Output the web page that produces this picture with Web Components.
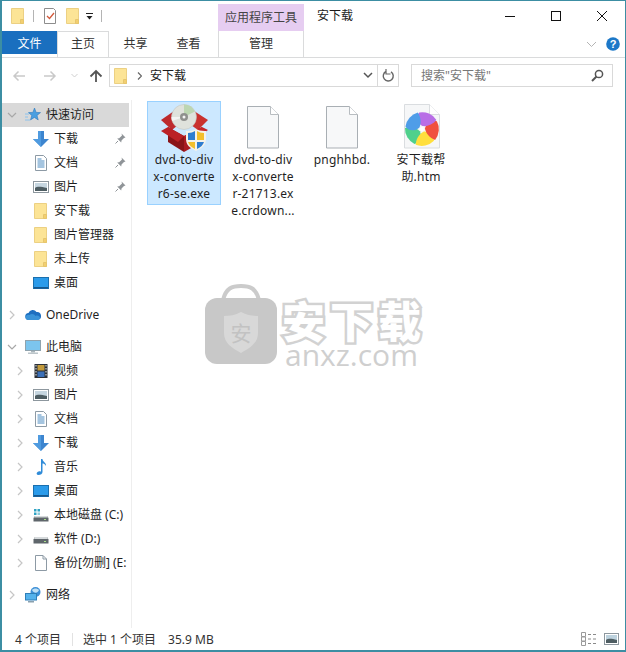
<!DOCTYPE html>
<html lang="zh-CN">
<head>
<meta charset="utf-8">
<title>安下载</title>
<style>
  html, body { margin: 0; padding: 0; background: #fff; }
  body { font: 12px "Noto Sans", "Noto Sans CJK SC", sans-serif; color: #1a1a1a; }
</style>
</head>
<body>
<explorer-window>
  <title-row slot="title"></title-row>
  <ribbon-tabs slot="ribbon"></ribbon-tabs>
  <address-row slot="address"></address-row>
  <nav-tree slot="nav">
    <nav-item selected arrow="open" icon="star" text="快速访问"></nav-item>
    <nav-item level="1" icon="down" text="下载" pin></nav-item>
    <nav-item level="1" icon="doc" text="文档" pin></nav-item>
    <nav-item level="1" icon="pic" text="图片" pin></nav-item>
    <nav-item level="1" icon="folder" text="安下载"></nav-item>
    <nav-item level="1" icon="folder" text="图片管理器"></nav-item>
    <nav-item level="1" icon="folder" text="未上传"></nav-item>
    <nav-item level="1" icon="desk" text="桌面" class="end"></nav-item>
    <nav-item arrow="shut" icon="cloud" text="OneDrive" class="end"></nav-item>
    <nav-item arrow="open" icon="pc" text="此电脑"></nav-item>
    <nav-item level="1" arrow="shut" icon="film" text="视频"></nav-item>
    <nav-item level="1" arrow="shut" icon="pic" text="图片"></nav-item>
    <nav-item level="1" arrow="shut" icon="doc" text="文档"></nav-item>
    <nav-item level="1" arrow="shut" icon="down" text="下载"></nav-item>
    <nav-item level="1" arrow="shut" icon="music" text="音乐"></nav-item>
    <nav-item level="1" arrow="shut" icon="desk" text="桌面"></nav-item>
    <nav-item level="1" arrow="shut" icon="sysdisk" text="本地磁盘 (C:)"></nav-item>
    <nav-item level="1" arrow="shut" icon="disk" text="软件 (D:)"></nav-item>
    <nav-item level="1" arrow="shut" icon="blank" text="备份[勿删] (E:" class="end"></nav-item>
    <nav-item arrow="shut" icon="net" text="网络"></nav-item>
  </nav-tree>
  <file-list slot="files">
    <file-item selected icon="setup">dvd-to-div<br>x-converte<br>r6-se.exe</file-item>
    <file-item icon="page">dvd-to-div<br>x-converte<br>r-21713.ex<br>e.crdown...</file-item>
    <file-item icon="page">pnghhbd.</file-item>
    <file-item icon="wheel">安下载帮<br>助.htm</file-item>
  </file-list>
  <status-bar slot="status"></status-bar>
  <water-mark slot="over"></water-mark>
</explorer-window>

<script>
const ICONS = {
  folder: `<svg viewBox="0 0 16 16"><path d="M1.500 .5h12v15h-12z" fill="#fce496" stroke="#ecd083"/><path d="M10.500 11.500h3v4h-3z" fill="#f3cf70" stroke="#e6c66e"/></svg>`,
  star: `<svg viewBox="0 0 16 16"><path d="M9.500 1l1.600 4.400 4.400.2-3.500 2.800 1.200 4.500-3.800-2.500-3.900 2.500 1.300-4.500L3.500 5.600l4.400-.2z" fill="#4a9fe0" stroke="#2b78c0" stroke-width=".6"/><path d="M0 7h4M0 10h3M0 13h5" stroke="#8cc2ec" stroke-width="1"/></svg>`,
  down: `<svg viewBox="0 0 16 16"><path d="M5 0h6v8h5l-8 8-8-8h5z" fill="#3d85cf"/><path d="M5 0h3v16l-8-8h5z" fill="#4f9be0"/></svg>`,
  doc: `<svg viewBox="0 0 16 16"><path d="M2.500 .5h8l3 3v12h-11z" fill="#fff" stroke="#8d9aa5"/><path d="M4.500 4h4M4.500 6h7M4.500 8h7M4.500 10h7M4.500 12h7" stroke="#4a8ac0" stroke-width="1"/></svg>`,
  pic: `<svg viewBox="0 0 16 16"><rect x=".5" y="2.500" width="15" height="11" fill="#fff" stroke="#8d979e"/><rect x="2" y="4" width="12" height="8" fill="#c6d6e0"/><path d="M2 9c3-2 6-1 12 0v3H2z" fill="#4e5d62"/></svg>`,
  desk: `<svg viewBox="0 0 16 16"><rect x=".5" y="2.500" width="15" height="11" fill="#2b9bea" stroke="#1a6fae"/><rect x="1" y="12" width="14" height="1.500" fill="#16578c"/></svg>`,
  cloud: `<svg viewBox="0 0 16 16"><path d="M4 13a3.500 3.500 0 0 1-.5-7A4.500 4.500 0 0 1 11.500 5 3.800 3.800 0 0 1 12.500 13z" fill="#1e6fc0"/><path d="M4 13c-2 0-3.500-1-3.500-3 0-1 2-3 4-2 2-2 5-1 6 1 2-1 4.500 0 4.500 2 0 1-1 2-2.500 2z" fill="#3a93d8"/></svg>`,
  pc: `<svg viewBox="0 0 16 16"><rect x=".5" y="1.500" width="15" height="10" fill="#7cc5ee" stroke="#8fa3ae"/><rect x="6" y="12" width="4" height="1.500" fill="#a9b5bc"/><rect x="3" y="13.500" width="10" height="1.500" fill="#bcc5ca"/></svg>`,
  film: `<svg viewBox="0 0 16 16"><rect x="1.500" y="1" width="13" height="14" fill="#2b3038"/><rect x="4.500" y="2" width="7" height="5.500" fill="#c29a3c"/><rect x="4.500" y="8.500" width="7" height="5.500" fill="#3b70b8"/><path d="M2.500 2h1v1.500h-1zM2.500 5h1v1.500h-1zM2.500 8h1v1.500h-1zM2.500 11h1v1.500h-1zM12.500 2h1v1.500h-1zM12.500 5h1v1.500h-1zM12.500 8h1v1.500h-1zM12.500 11h1v1.500h-1z" fill="#e8edf0"/></svg>`,
  music: `<svg viewBox="0 0 16 16"><path d="M8 0h1.500c0 3 4 3.500 3.500 7-1-2-2.500-2.500-3.500-2.500V13c0 2-2 3-4 3s-2.500-2-1-3c1-.8 2.500-.8 3.500-.3z" fill="#2f8bd8"/></svg>`,
  sysdisk: `<svg viewBox="0 0 16 16"><path d="M1 2h2.500v2.500H1zM4.500 2H7v2.500H4.500zM1 5.500h2.500V8H1z" fill="#2fa3c4"/><path d="M4.500 5.500H7V8H4.500z" fill="#8fcbdc"/><path d="M2 9h12l1.500 2v3.500H.5V11z" fill="#5f666b"/><path d="M2 9h12l1 1.500H1z" fill="#d6dadc"/><rect x="11" y="12" width="2" height="1" fill="#a8e08a"/></svg>`,
  disk: `<svg viewBox="0 0 16 16"><path d="M2 6h12l1.500 2.500v4H.5v-4z" fill="#5f666b"/><path d="M2 6h12l1 2H1z" fill="#d6dadc"/><rect x="11" y="10" width="2" height="1" fill="#a8e08a"/></svg>`,
  blank: `<svg viewBox="0 0 16 16"><path d="M2.500 .5h7.500l3.500 3.500v11.500h-11z" fill="#fff" stroke="#8d9aa5"/><path d="M10 .5V4h3.500" fill="none" stroke="#8d9aa5"/></svg>`,
  net: `<svg viewBox="0 0 16 16"><circle cx="10.500" cy="5" r="5" fill="#3d8fd6"/><path d="M7 3c2-2 5-2 7 0-1 3-5 4-7 0z" fill="#bfe0f5"/><rect x=".5" y="6.500" width="11" height="6.500" fill="#54b2ec" stroke="#2f7fb8"/><rect x="3" y="14" width="6" height="1.500" fill="#8aa0ae"/></svg>`
};

const PETAL = "M0 -3C-5 -5 -8 -11 -5 -16A17 17 0 0 1 13 -11C10 -6 5 -3 0 -3z";

const BIG_ICONS = {
  page: `<svg viewBox="0 0 48 50" width="48" height="50"><path d="M8.500 4.500h23l8 8v33.500h-31z" fill="#f7f8f9" stroke="#a9afb4"/><path d="M31.500 4.500v8h8" fill="#fff" stroke="#b8bdc1"/></svg>`,
  wheel: `<svg viewBox="0 0 48 50" width="48" height="50"><path d="M7.500 2.500h25l10 10v33.500h-35z" fill="#f6f7f8" stroke="#dadde0"/><path d="M32.500 2.500v10h10" fill="#fff" stroke="#dadde0"/>
    <g transform="translate(25 27)">
      <path d="${PETAL}" fill="#4fd08c" transform="rotate(224)"/>
      <path d="${PETAL}" fill="#ffdf3d" transform="rotate(152)"/>
      <path d="${PETAL}" fill="#f0503f" transform="rotate(80)"/>
      <path d="${PETAL}" fill="#b86ee6" transform="rotate(8)"/>
      <path d="${PETAL}" fill="#4f9de8" transform="rotate(296)"/>
      <circle r="2" fill="#fff"/>
    </g></svg>`,
  setup: `<svg viewBox="0 2 56 50" width="56" height="50">
    <path d="M5 20L18 11 28 20 16 30z" fill="#bd2a2d"/>
    <path d="M38 11L52 20 42 30 28 20z" fill="#c9312f"/>
    <circle cx="28" cy="17" r="12.500" fill="#dfe2dc" stroke="#bdbfbb" stroke-width=".5"/>
    <path d="M28 4.500a12.500 12.500 0 0 1 11 7L28 17z" fill="#bcd6b2"/>
    <path d="M16 21a12.500 12.500 0 0 1-.5-4H28z" fill="#f3f4f4"/>
    <circle cx="28" cy="17" r="4" fill="#8f908e"/><circle cx="28" cy="17" r="1.500" fill="#f4f4f4"/>
    <path d="M12 27l16 9v16L12 42z" fill="#8a1418"/>
    <path d="M28 36l18-9v15L28 52z" fill="#aa1b20"/>
    <path d="M12 27l16 9-6 6L5 31z" fill="#bb2126"/>
    <path d="M46 27L28 36l8 5 16-11z" fill="#c5262a"/>
    <path d="M34 31c2 0 4-1 6-2 2 1 5 2 9 2l1 0v8c0 6-4 9-10 12-6-3-10-6-10-12v-8z" fill="#f5f2ea"/>
    <path d="M32 33c3 0 5-1 7-2v9h-7z" fill="#2e7dd0"/>
    <path d="M41 31c2 1 4 2 7 2v7h-7z" fill="#f3bf2c"/>
    <path d="M32 42h7v7c-4-2-6-4-7-7z" fill="#f3bf2c"/>
    <path d="M41 42h7c-1 3-3 5-7 7z" fill="#2e7dd0"/>
  </svg>`
};

// 共用的外框,各区域通过 slot 放进来
class ExplorerWindow extends HTMLElement {
  constructor() {
    super();
    this.shadow = this.attachShadow({ mode: "open" });
  }
  connectedCallback() {
    this.shadow.innerHTML = `
      <style>
        :host { display: flex; flex-direction: column; position: relative; box-sizing: border-box;
          width: 626px; height: 652px; background: #fff; overflow: hidden;
          border: solid #3c8ea3; border-width: 1px 1px 2px 2px; }
        .body { flex: 1; display: flex; min-height: 0; }
      </style>
      <slot name="title"></slot>
      <slot name="ribbon"></slot>
      <slot name="address"></slot>
      <div class="body"><slot name="nav"></slot><slot name="files"></slot></div>
      <slot name="status"></slot>
      <slot name="over"></slot>
    `;
  }
}
customElements.define("explorer-window", ExplorerWindow);

class TitleRow extends HTMLElement {
  constructor() {
    super();
    this.shadow = this.attachShadow({ mode: "open" });
  }
  connectedCallback() {
    this.shadow.innerHTML = `
      <style>
        :host { display: flex; align-items: flex-end; height: 30px; flex: none; }
        .quick { display: flex; align-items: center; height: 30px; padding-left: 8px; width: 216px; box-sizing: border-box; }
        .quick svg { width: 16px; height: 16px; display: block; }
        .sep { width: 1px; height: 12px; background: #b4b4b4; margin: 0 8px 0 7px; }
        .tool { width: 86px; height: 27px; box-sizing: border-box; padding-bottom: 2px; background: #e6cdf1; color: #444; display: flex;
          align-items: center; justify-content: center; font-size: 12px; }
        .name { margin-left: 13px; height: 30px; line-height: 30px; flex: 1; }
        .btns { display: flex; height: 30px; }
        .btns svg { width: 46px; height: 30px; display: block; }
      </style>
      <div class="quick">
        ${ICONS.folder}
        <span class="sep"></span>
        <svg viewBox="0 0 16 16"><path d="M2.500 .5h9l2 2v13h-11z" fill="#fff" stroke="#8d8d8d"/><path d="M5 8l2.500 2.500L12 5" fill="none" stroke="#d2583a" stroke-width="1.300"/></svg>
        <span style="width:7px"></span>
        ${ICONS.folder}
        <svg style="width:9px;height:9px;margin:0 7px 0 4px" viewBox="0 0 9 9"><path d="M1 1.500h7" stroke="#222"/><path d="M1.500 4h6L4.500 7.500z" fill="#222"/></svg>
        <span class="sep" style="margin:0"></span>
      </div>
      <div class="tool">应用程序工具</div>
      <div class="name">安下载</div>
      <div class="btns">
        <svg viewBox="0 0 46 30"><path d="M18 15.500h10" stroke="#111"/></svg>
        <svg viewBox="0 0 46 30"><rect x="18.500" y="10.500" width="9" height="9" fill="none" stroke="#111"/></svg>
        <svg viewBox="0 0 46 30"><path d="M18 10l10 10M28 10L18 20" stroke="#111"/></svg>
      </div>
    `;
  }
}
customElements.define("title-row", TitleRow);

class RibbonTabs extends HTMLElement {
  constructor() {
    super();
    this.shadow = this.attachShadow({ mode: "open" });
  }
  connectedCallback() {
    this.shadow.innerHTML = `
      <style>
        :host { display: flex; height: 27px; flex: none; box-sizing: border-box; border-bottom: 1px solid #dadbdc; color: #333; }
        .tab { display: flex; align-items: center; justify-content: center; height: 23px; }
        .file { width: 55px; background: #1a6fbf; color: #fff; }
        .home { width: 52px; height: 26px; box-sizing: border-box; border: 1px solid #dadbdc; border-bottom: 0; background: #fff; padding-bottom: 3px; margin-bottom: -1px; }
        .plain { width: 53px; }
        .manage { width: 86px; height: 26px; box-sizing: border-box; border: solid #dadbdc; border-width: 0 1px; padding-bottom: 3px; margin-left: 3px; }
        .right { margin-left: auto; display: flex; align-items: center; gap: 9px; padding: 0 5px 0 0; }
      </style>
      <div class="tab file">文件</div>
      <div class="tab home">主页</div>
      <div class="tab plain">共享</div>
      <div class="tab plain">查看</div>
      <div class="tab manage">管理</div>
      <div class="right">
        <svg width="11" height="7" viewBox="0 0 11 7"><path d="M1 1l4.500 4.500L10 1" fill="none" stroke="#b4b4b4"/></svg>
        <svg width="14" height="14" viewBox="0 0 14 14"><circle cx="7" cy="7" r="6.800" fill="#1c78c8"/><text x="7" y="11" text-anchor="middle" font-family="Liberation Sans" font-weight="700" font-size="11" fill="#fff">?</text></svg>
      </div>
    `;
  }
}
customElements.define("ribbon-tabs", RibbonTabs);

class AddressRow extends HTMLElement {
  constructor() {
    super();
    this.shadow = this.attachShadow({ mode: "open" });
  }
  connectedCallback() {
    this.shadow.innerHTML = `
      <style>
        :host { display: flex; align-items: center; height: 23px; margin: 6px 0 13px; flex: none; }
        .navs { width: 107px; display: flex; align-items: center; padding-left: 9px; box-sizing: border-box; }
        .navs svg { display: block; }
        .box { box-sizing: border-box; height: 23px; border: 1px solid #d9d9d9; display: flex; align-items: center; }
        .box span.label { padding-bottom: 2px; }
        .path { width: 290px; margin-right: 12px; }
        .path .fold { width: 16px; height: 16px; margin-left: 3px; }
        .path .fold svg { display: block; width: 16px; height: 16px; }
        .crumb { flex: 1; margin-left: 8px; display: flex; align-items: center; gap: 8px; }
        .seg { width: 20px; height: 21px; border-left: 1px solid #d9d9d9; display: flex; align-items: center; justify-content: center; }
        .search { width: 202px; justify-content: space-between; padding: 0 8px 0 9px; color: #777; }
      </style>
      <div class="navs">
        <svg width="16" height="12" viewBox="0 0 16 12"><path d="M14 6H3M7.500 1.500L3 6l4.500 4.500" fill="none" stroke="#c9c9c9" stroke-width="1.500"/></svg>
        <span style="width:15px"></span>
        <svg width="16" height="12" viewBox="0 0 16 12"><path d="M2 6h11M8.500 1.500L13 6l-4.500 4.500" fill="none" stroke="#c9c9c9" stroke-width="1.500"/></svg>
        <span style="width:13px"></span>
        <svg width="7" height="5" viewBox="0 0 7 5"><path d="M.5 1l3 3 3-3" fill="none" stroke="#cfcfcf"/></svg>
        <span style="width:11px"></span>
        <svg width="14" height="14" viewBox="0 0 14 14"><path d="M7 13V2M1.500 7.500L7 2l5.500 5.500" fill="none" stroke="#555" stroke-width="1.800"/></svg>
      </div>
      <div class="box path">
        <span class="fold">${ICONS.folder}</span>
        <div class="crumb">
          <svg width="5" height="8" viewBox="0 0 5 8"><path d="M1 .5L4.500 4 1 7.500" fill="none" stroke="#666" stroke-width="1.200"/></svg>
          <span class="label">安下载</span>
        </div>
        <svg width="10" height="7" viewBox="0 0 10 7" style="margin-right:4px"><path d="M1 1l4 4 4-4" fill="none" stroke="#555" stroke-width="1.500"/></svg>
        <div class="seg"><svg width="13" height="14" viewBox="0 0 13 14"><path d="M4 2.500a5 5 0 1 0 5 .3" fill="none" stroke="#666" stroke-width="1.400"/><path d="M4 0v5h4.500" fill="none" stroke="#666" stroke-width="1.200"/></svg></div>
      </div>
      <div class="box search">
        <span class="label">搜索"安下载"</span>
        <svg width="13" height="13" viewBox="0 0 13 13"><circle cx="8" cy="5" r="3.600" fill="none" stroke="#555" stroke-width="1.500"/><path d="M5.500 7.500L1 12" stroke="#555" stroke-width="2"/></svg>
      </div>
    `;
  }
}
customElements.define("address-row", AddressRow);

class NavTree extends HTMLElement {
  constructor() {
    super();
    this.attachShadow({ mode: "open" }).innerHTML = `
      <style>
        :host { display: flex; flex-direction: column; box-sizing: border-box; width: 130px;
          flex: none; padding: 3px 2px 0 0; border-right: 1px solid #eeeeee; overflow: hidden; }
      </style>
      <slot></slot>
    `;
  }
}
customElements.define("nav-tree", NavTree);

class NavItem extends HTMLElement {
  constructor() {
    super();
    this.shadow = this.attachShadow({ mode: "open" });
  }
  connectedCallback() {
    const level = Number(this.getAttribute("level") || 0);
    const arrow = this.getAttribute("arrow");
    let arrowSvg = "";
    if (arrow === "open") arrowSvg = `<svg width="10" height="7" viewBox="0 0 10 7"><path d="M1 1l4 4 4-4" fill="none" stroke="#a8a8a8" stroke-width="1.200"/></svg>`;
    if (arrow === "shut") arrowSvg = `<svg width="7" height="10" viewBox="0 0 7 10"><path d="M1 1l4 4-4 4" fill="none" stroke="#c6c6c6" stroke-width="1.200"/></svg>`;
    const pin = this.hasAttribute("pin")
      ? `<svg class="pin" width="11" height="11" viewBox="0 0 11 11"><path d="M6.500 .5l4 4-1.500 .5-2.500 2.500-.3 2-4-4 2-.3L7 2.500z" fill="#8f9498"/><path d="M3 8L.5 10.500" stroke="#8f9498"/></svg>`
      : "";
    this.shadow.innerHTML = `
      <style>
        :host { display: flex; align-items: center; height: 24px; flex: none; color: #1f1f1f; white-space: nowrap; position: relative; }
        :host([selected]) { background: #d9d9d9; }
        :host(.end) { margin-bottom: 8px; }
        .arrow { width: 10px; height: 10px; display: flex; align-items: center; justify-content: center; flex: none; margin-left: ${5 + level * 8}px; }
        .icon { width: 16px; height: 16px; margin-left: 8px; flex: none; }
        .icon svg { width: 16px; height: 16px; display: block; }
        .text { margin-left: 5px; flex: none; padding-bottom: 2px; }
        .pin { position: absolute; left: 113px; top: 6px; }
      </style>
      <span class="arrow">${arrowSvg}</span>
      <span class="icon">${ICONS[this.getAttribute("icon")]}</span>
      <span class="text">${this.getAttribute("text")}</span>
      ${pin}
    `;
  }
}
customElements.define("nav-item", NavItem);

class FileList extends HTMLElement {
  constructor() {
    super();
    this.attachShadow({ mode: "open" }).innerHTML = `
      <style>
        :host { display: flex; flex: 1; align-items: flex-start; gap: 5px; padding: 1px 0 0 15px; }
      </style>
      <slot></slot>
    `;
  }
}
customElements.define("file-list", FileList);

class FileItem extends HTMLElement {
  constructor() {
    super();
    this.shadow = this.attachShadow({ mode: "open" });
  }
  connectedCallback() {
    this.shadow.innerHTML = `
      <style>
        :host { display: block; box-sizing: border-box; width: 74px; flex: none; border: 1px solid transparent; padding-bottom: 2px; }
        :host([selected]) { background: #cce8ff; border-color: #99d1ff; }
        .pic { height: 50px; display: flex; justify-content: center; }
        .pic svg { display: block; flex: none; }
        .name { text-align: center; line-height: 17px; margin-top: -1px; color: #1f1f1f; letter-spacing: .2px; white-space: nowrap; }
      </style>
      <div class="pic">${BIG_ICONS[this.getAttribute("icon")]}</div>
      <div class="name"><slot></slot></div>
    `;
  }
}
customElements.define("file-item", FileItem);

class StatusBar extends HTMLElement {
  constructor() {
    super();
    this.shadow = this.attachShadow({ mode: "open" });
  }
  connectedCallback() {
    this.shadow.innerHTML = `
      <style>
        :host { display: flex; align-items: center; height: 22px; flex: none; padding: 0 6px 0 13px; color: #333; }
        .sep { width: 1px; height: 13px; background: #e2e2e2; margin: 0 10px 0 11px; }
        .gap { margin-left: 12px; }
        .views { margin-left: auto; display: flex; gap: 7px; align-items: center; }
        .views svg { display: block; }
      </style>
      <span>4 个项目</span>
      <span class="sep"></span>
      <span>选中 1 个项目</span>
      <span class="gap">35.9 MB</span>
      <div class="views">
        <svg width="16" height="14" viewBox="0 0 16 14"><path d="M.5 .5h4v4h-4zM.5 5h4v4h-4zM.5 9.500h4v4h-4z" fill="none" stroke="#9a9a9a"/><path d="M7 2.500h3M12 2.500h3M7 7h3M12 7h3M7 11.500h3M12 11.500h3" stroke="#8a8a8a"/></svg>
        <svg width="15" height="12" viewBox="0 0 15 12"><rect x=".5" y=".5" width="14" height="11" fill="#fff" stroke="#8d979e"/><rect x="2" y="2" width="11" height="8" fill="#bdd2de"/><path d="M2 7c3-2 6-1 11 0v3H2z" fill="#4e5d62"/></svg>
      </div>
    `;
  }
}
customElements.define("status-bar", StatusBar);

// 水印盖在内容上面
class WaterMark extends HTMLElement {
  constructor() {
    super();
    this.shadow = this.attachShadow({ mode: "open" });
  }
  connectedCallback() {
    this.shadow.innerHTML = `
      <style>
        :host { position: absolute; left: 203px; top: 283px; display: flex; gap: 5px; pointer-events: none; }
        .words { display: flex; flex-direction: column; align-items: flex-start; padding-top: 12px; }
        .cn { font-size: 43px; line-height: 47px; height: 47px; font-weight: 900; letter-spacing: 5px; color: #fff;
          -webkit-text-stroke: 5px #d2d2d2; paint-order: stroke fill; font-family: "Noto Sans CJK SC", sans-serif; white-space: nowrap; }
        .en { font: 30px/24px "Open Sans", sans-serif; color: #cfcfcf; margin: 0 0 0 3px; }
      </style>
      <svg width="72" height="80" viewBox="0 0 72 80" style="display:block">
        <path d="M18 16C21 4 27 2 36 2s15 2 18 14" fill="none" stroke="#cbcbcb" stroke-width="4"/>
        <rect x="0" y="14" width="72" height="66" rx="12" fill="#c8c8c8"/>
        <path d="M36 28c6 3 11 4 17 4v17c0 10-8 15-17 20-9-5-17-10-17-20V32c6 0 11-1 17-4z" fill="#d8d8d8"/>
        <text x="36" y="57" text-anchor="middle" font-size="21" fill="#c2c2c2" font-family="Noto Sans CJK SC">安</text>
      </svg>
      <div class="words">
        <div class="cn">安下载</div>
        <div class="en">anxz.com</div>
      </div>
    `;
  }
}
customElements.define("water-mark", WaterMark);
</script>
</body>
</html>
